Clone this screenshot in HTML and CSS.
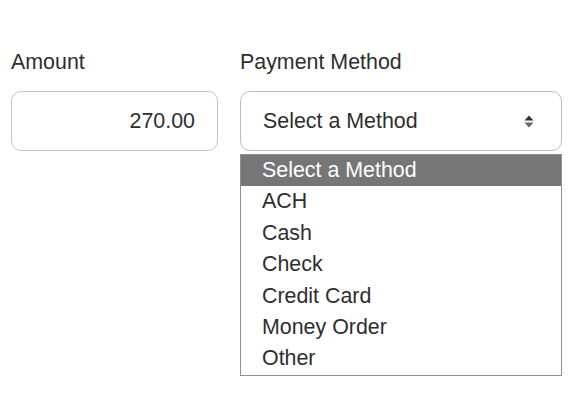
FILE: index.html
```html
<!DOCTYPE html>
<html>
<head>
<meta charset="utf-8">
<link rel="stylesheet" href="styles.css">
</head>
<body>
<div class="form">
  <div class="field field-amount">
    <div class="label">Amount</div>
    <div class="input">270.00</div>
  </div>
  <div class="field field-method">
    <div class="label">Payment Method</div>
    <div class="select">
      <span class="select-text">Select a Method</span>
      <svg class="arrows" width="10" height="13" viewBox="0 0 10 13">
        <polygon points="0.5,5.5 9.5,5.5 5,0.5" fill="#333333"/>
        <polygon points="0.5,7.5 9.5,7.5 5,12.5" fill="#666666"/>
      </svg>
    </div>
    <div class="dropdown">
      <div class="option selected">Select a Method</div>
      <div class="option">ACH</div>
      <div class="option">Cash</div>
      <div class="option">Check</div>
      <div class="option">Credit Card</div>
      <div class="option">Money Order</div>
      <div class="option">Other</div>
    </div>
  </div>
</div>
</body>
</html>
```

FILE: styles.css
```css
html, body {
  margin: 0;
  padding: 0;
  background: #ffffff;
}
body {
  font-family: "Liberation Sans", Arial, sans-serif;
  font-size: 21.4px;
  color: #2e2e2e;
}
.form {
  display: flex;
  align-items: flex-start;
  gap: 22px;
  padding: 50px 0 0 11px;
}
.field {
  display: flex;
  flex-direction: column;
}
.field-amount { width: 207px; }
.field-method { width: 322px; }
.label {
  line-height: 25px;
  height: 25px;
  margin-bottom: 16px;
}
.input, .select {
  box-sizing: border-box;
  height: 60px;
  border: 1px solid #c6c6c6;
  border-radius: 10px;
  background: #fff;
  display: flex;
  align-items: center;
}
.input {
  justify-content: flex-end;
  padding-right: 22px;
}
.select {
  justify-content: space-between;
  padding: 0 27px 0 22px;
  border-color: #bdbdbd;
}
.arrows {
  display: block;
  margin-top: 1px;
}
.dropdown {
  margin-top: 3px;
  width: 322px;
  box-sizing: border-box;
  border: 1px solid #8f8f8f;
  background: #fff;
}
.option {
  height: 31.4px;
  line-height: 31.4px;
  padding-left: 21px;
}
.option.selected {
  background: #767676;
  color: #ffffff;
}
```
